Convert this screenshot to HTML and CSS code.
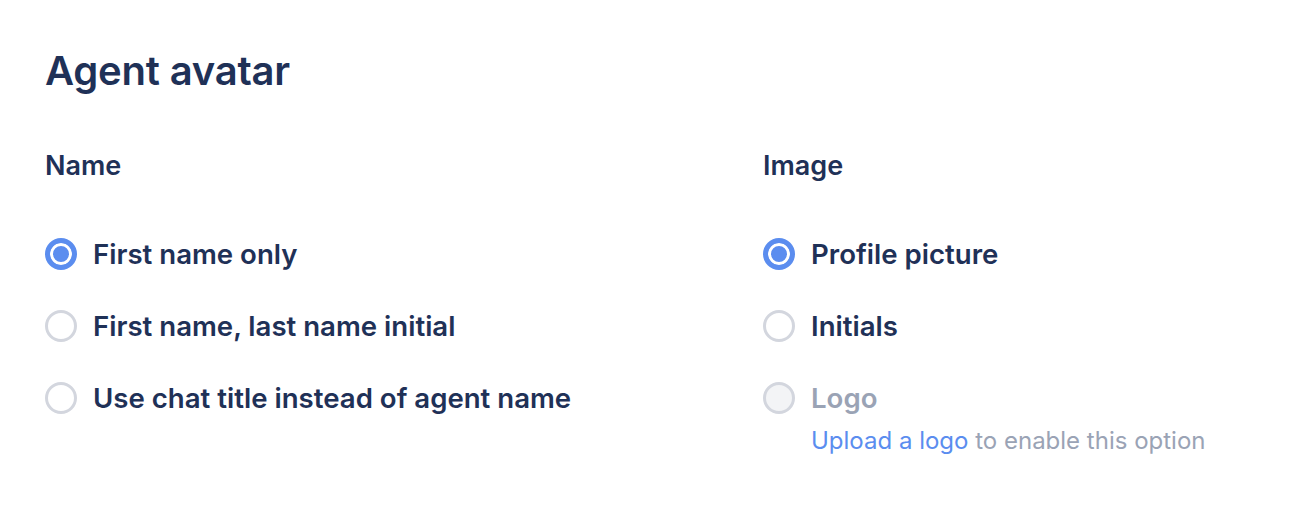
FILE: index.html
```html
<!DOCTYPE html>
<html lang="en">
<head>
    <meta charset="UTF-8">
    <title>Agent avatar</title>
    <link rel="stylesheet" href="styles.css">
</head>
<body>

<section class="settings">
    <h1>Agent avatar</h1>
    <div class="columns">
        <div class="group">
            <h2>Name</h2>
            <label class="option">
                <input type="radio" name="name" checked>
                <span class="radio"></span>
                <span class="label">First name only</span>
            </label>
            <label class="option">
                <input type="radio" name="name">
                <span class="radio"></span>
                <span class="label">First name, last name initial</span>
            </label>
            <label class="option">
                <input type="radio" name="name">
                <span class="radio"></span>
                <span class="label">Use chat title instead of agent name</span>
            </label>
        </div>
        <div class="group">
            <h2>Image</h2>
            <label class="option">
                <input type="radio" name="image" checked>
                <span class="radio"></span>
                <span class="label">Profile picture</span>
            </label>
            <label class="option">
                <input type="radio" name="image">
                <span class="radio"></span>
                <span class="label">Initials</span>
            </label>
            <label class="option disabled">
                <input type="radio" name="image" disabled>
                <span class="radio"></span>
                <span class="label">Logo</span>
            </label>
            <p class="hint"><a href="#">Upload a logo</a> to enable this option</p>
        </div>
    </div>
</section>

</body>
</html>
```

FILE: styles.css
```css
* {
    margin: 0;
    padding: 0;
    box-sizing: border-box;
}

body {
    font-family: Inter, "Noto Sans", sans-serif;
    background-color: #fff;
    color: #1f3157;
}

.settings {
    padding: 48px 45px;
}

h1 {
    font-size: 40px;
    font-weight: 600;
    line-height: 46px;
    letter-spacing: -0.2px;
}

.columns {
    display: grid;
    grid-template-columns: 718px 1fr;
    margin-top: 56px;
}

h2 {
    font-size: 27px;
    font-weight: 600;
    line-height: 32px;
    margin-bottom: 36px;
}

.option {
    display: flex;
    align-items: center;
    gap: 16px;
    height: 72px;
    cursor: pointer;
}

.option input {
    display: none;
}

.radio {
    width: 32px;
    height: 32px;
    border-radius: 50%;
    border: 3px solid #d3d6de;
    background-color: #fff;
    flex-shrink: 0;
}

.option input:checked + .radio {
    border: 5px solid #5b8def;
    box-shadow: inset 0 0 0 3px #fff;
    background-color: #5b8def;
}

.label {
    font-size: 27.6px;
    font-weight: 600;
}

.option.disabled {
    cursor: default;
}

.option.disabled .radio {
    background-color: #f3f4f6;
}

.option.disabled .label {
    color: #9aa3b5;
}

.hint {
    margin-left: 48px;
    margin-top: -8px;
    font-size: 24px;
    color: #9aa3b5;
}

.hint a {
    color: #5b8def;
    text-decoration: none;
}
```
